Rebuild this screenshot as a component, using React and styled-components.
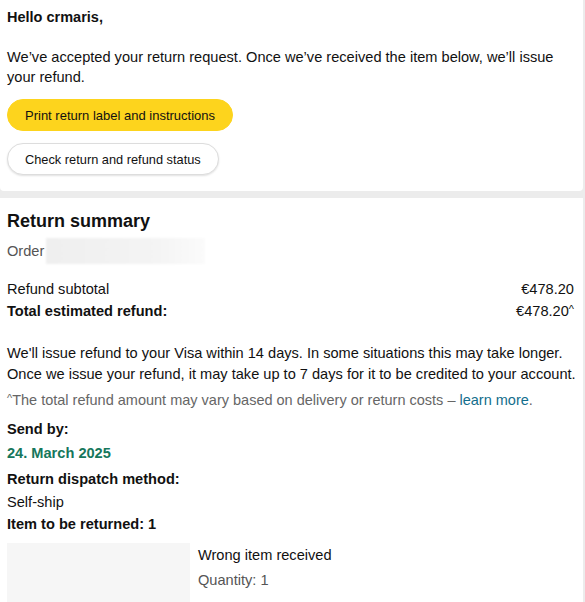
import React from 'react';
import styled, { createGlobalStyle } from 'styled-components';

const GlobalStyle = createGlobalStyle`
  body {
    margin: 0;
    background: #ececec;
    font-family: "Liberation Sans", Arial, sans-serif;
    color: #111;
  }
`;

const Page = styled.div`
  display: flex;
  flex-direction: column;
  gap: 7px;
  width: 583px;
`;

const Card = styled.section`
  background: #fff;
  border-radius: 0 0 4px 4px;
  padding: ${(p) => p.$pad || '9px 7px 16px'};
`;

const Greeting = styled.div`
  font-weight: bold;
  font-size: 14.5px;
  line-height: 17px;
  margin: 0 0 21px;
`;

const Text = styled.p`
  margin: 0;
  font-size: 14.6px;
  line-height: ${(p) => p.$lh || '20px'};
  color: #111;
`;

const Buttons = styled.div`
  display: flex;
  flex-direction: column;
  align-items: flex-start;
  gap: 12px;
  margin-top: 12px;
`;

const Pill = styled.button`
  font-family: inherit;
  font-size: ${(p) => p.$primary ? '13px' : '12.8px'};
  color: #111;
  height: 32px;
  padding: 0 17px;
  border-radius: 16px;
  border: 1px solid ${(p) => p.$primary ? '#fdd41d' : '#ddd'};
  background: ${(p) => p.$primary ? '#fdd41d' : '#fff'};
  box-shadow: ${(p) => p.$primary ? 'none' : '0 1px 2px rgba(0,0,0,0.12)'};
`;

const Heading = styled.h2`
  margin: 0 0 5px;
  font-size: 18px;
  line-height: 22px;
  font-weight: bold;
`;

const OrderLine = styled.div`
  display: flex;
  align-items: center;
  font-size: 14.6px;
  color: #555;
  height: 28px;
`;

const Blur = styled.span`
  display: inline-block;
  width: 159px;
  height: 26px;
  margin-left: 2px;
  background: linear-gradient(90deg, #efefef, #f4f4f4 70%, #fbfbfb);
  filter: blur(1px);
`;

const Rows = styled.div`
  margin: 13px 0 21px;
  padding-right: 4px;
`;

const Row = styled.div`
  display: flex;
  justify-content: space-between;
  font-size: 14.6px;
  line-height: 22px;
  font-weight: ${(p) => p.$bold ? 'bold' : 'normal'};
  span:last-child { font-weight: normal; }
`;

const Caret = styled.sup`
  font-size: 11px;
  line-height: 0;
  vertical-align: 3px;
`;

const Note = styled.p`
  margin: 5px 0 0;
  font-size: 14.5px;
  line-height: 20px;
  color: #666;
  a { color: #136e8c; text-decoration: none; }
`;

const Label = styled.div`
  font-size: 14.6px;
  font-weight: bold;
  line-height: 22px;
  margin-top: ${(p) => p.$top || '0'};
`;

const DateText = styled.div`
  font-size: 14.6px;
  font-weight: bold;
  color: #16775c;
  line-height: 22px;
  margin-top: 2px;
`;

const Value = styled.div`
  font-size: 14.6px;
  line-height: 21px;
  margin-top: 2px;
`;

const Item = styled.div`
  display: flex;
  gap: 8px;
  margin-top: 8px;
`;

const Thumb = styled.div`
  width: 183px;
  height: 70px;
  background: #f6f6f6;
  flex-shrink: 0;
`;

const ItemInfo = styled.div`
  font-size: 14.6px;
  line-height: 25px;
`;

const Qty = styled.div`
  color: #555;
`;

export default function App() {
  return (
    <>
      <GlobalStyle />
      <Page>
        <Card>
          <Greeting>Hello crmaris,</Greeting>
          <Text>
            We’ve accepted your return request. Once we’ve received the item below, we’ll issue your refund.
          </Text>
          <Buttons>
            <Pill $primary>Print return label and instructions</Pill>
            <Pill>Check return and refund status</Pill>
          </Buttons>
        </Card>
        <Card $pad="12px 5px 0 7px">
          <Heading>Return summary</Heading>
          <OrderLine>Order<Blur /></OrderLine>
          <Rows>
            <Row><span>Refund subtotal</span><span>€478.20</span></Row>
            <Row $bold><span>Total estimated refund:</span><span>€478.20<Caret>^</Caret></span></Row>
          </Rows>
          <Text $lh="21px">
            We'll issue refund to your Visa within 14 days. In some situations this may take longer.
            Once we issue your refund, it may take up to 7 days for it to be credited to your account.
          </Text>
          <Note><Caret>^</Caret>The total refund amount may vary based on delivery or return costs – <a href="#">learn more</a>.</Note>
          <Label $top="8px">Send by:</Label>
          <DateText>24. March 2025</DateText>
          <Label $top="4px">Return dispatch method:</Label>
          <Value>Self-ship</Value>
          <Label>Item to be returned: 1</Label>
          <Item>
            <Thumb />
            <ItemInfo>
              <div>Wrong item received</div>
              <Qty>Quantity: 1</Qty>
            </ItemInfo>
          </Item>
        </Card>
      </Page>
    </>
  );
}
